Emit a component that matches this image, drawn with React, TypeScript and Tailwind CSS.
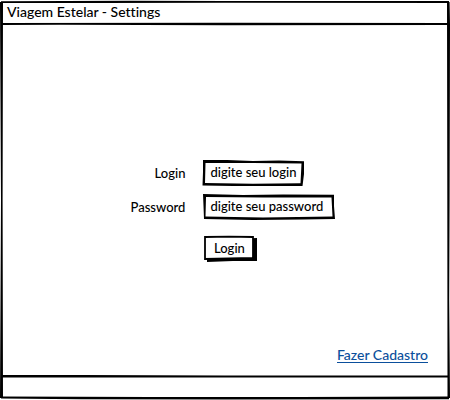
import type { ReactNode } from 'react';

function Sketch({ viewBox, children }: { viewBox: string; children: ReactNode }) {
  return (
    <svg
      aria-hidden="true"
      viewBox={viewBox}
      preserveAspectRatio="none"
      className="pointer-events-none absolute inset-0 h-full w-full overflow-visible"
    >
      {children}
    </svg>
  );
}

function Field({ id, type, placeholder, width, outline }: {
  id: string; type: string; placeholder: string; width: string; outline: ReactNode;
}) {
  return (
    <div className={`relative h-[26px] ${width}`}>
      {outline}
      <input
        id={id}
        type={type}
        placeholder={placeholder}
        className="relative h-6 w-full bg-transparent pr-1 pl-[7px] leading-5 placeholder:text-black placeholder:opacity-100 focus:outline-none"
      />
    </div>
  );
}

export default function App() {
  return (
    <div className="relative flex min-h-screen flex-col bg-white font-['Lato','Open_Sans',sans-serif] text-[14px] leading-5 font-medium text-black [font-variant-ligatures:none]">
      <Sketch viewBox="0 0 450 400">
        <path d="M0 2 L3 2 L2.600 200 L3 398 L0 398 L1 200 Z" />
        <path d="M1 1.200 L130 0.800 L225 1 L449 1 L449 3 L225 2.800 L100 3 L1 3 Z" />
        <path d="M447 2 L449.600 2 L450 24 L449.600 200 L449.200 300 L450 398 L447.500 398 L447.300 200 Z" />
        <path d="M1 396.500 L150 397 L300 397 L449 396.500 L449 399.200 L225 399.400 L80 399.200 L1 398.500 Z" />
      </Sketch>
      <header className="relative flex h-6 items-center px-[7px]">
        <Sketch viewBox="0 0 450 24">
          <path d="M1 23 L225 22.700 L449 23 L449 25 L225 25.200 L60 24.800 L1 25 Z" />
        </Sketch>
        <h1>Viagem Estelar - Settings</h1>
      </header>
      <main className="relative flex flex-1 flex-col pt-[136px]">
        <form className="grid grid-cols-[auto_auto] items-center justify-center gap-x-[18px] gap-y-2 pl-4 text-[13px]" onSubmit={(e) => e.preventDefault()}>
          <label htmlFor="login" className="text-right">Login</label>
          <Field id="login" type="text" placeholder="digite seu login" width="w-[102px]" outline={
            <Sketch viewBox="0 0 102 26">
              <path fillRule="evenodd" d="M0 0 L24 0 L50 1 L76 0.500 L101 1.300 L101 14 L99.500 26 L60 26 L30 26 L-0.500 25.500 L0 12 Z M2.500 3 L2 23 L50 23.700 L97.500 23.300 L98.500 3.500 L50 3 Z" />
            </Sketch>
          } />
          <label htmlFor="password" className="text-right">Password</label>
          <Field id="password" type="password" placeholder="digite seu password" width="w-[132px]" outline={
            <Sketch viewBox="0 0 132 26">
              <path fillRule="evenodd" d="M0 0 L40 1 L80 0.500 L131 0.800 L131 12 L132 25 L100 25.500 L50 26 L1 25 L0.500 12 Z M3 3 L2.500 22.500 L60 23.500 L129.500 22.500 L128.500 3.500 L60 3.500 Z" />
            </Sketch>
          } />
          <div className="relative col-start-2 mt-2 h-6 w-[52px]">
            <Sketch viewBox="0 0 52 24">
              <path d="M4 4 L54 2 L54 25 L30 25 L4 26 Z" />
              <path d="M2 1 L26 0.600 L50 1 L50 22 L26 22.500 L2 23 Z" fill="#fff" stroke="#000" strokeWidth="1.800" />
            </Sketch>
            <button type="submit" className="relative h-6 w-full">Login</button>
          </div>
        </form>
        <a href="#cadastro" className="mt-auto mr-[22px] mb-[13px] self-end border-b border-[#0b4f9c] leading-[14px] text-[#0b4f9c]">Fazer Cadastro</a>
      </main>
      <footer className="relative h-6">
        <Sketch viewBox="0 0 450 24">
          <path d="M1 -1 L80 -1 L225 -0.600 L449 -0.500 L449 1.600 L225 1.600 L60 1.500 L1 1.500 Z" />
        </Sketch>
      </footer>
    </div>
  );
}
